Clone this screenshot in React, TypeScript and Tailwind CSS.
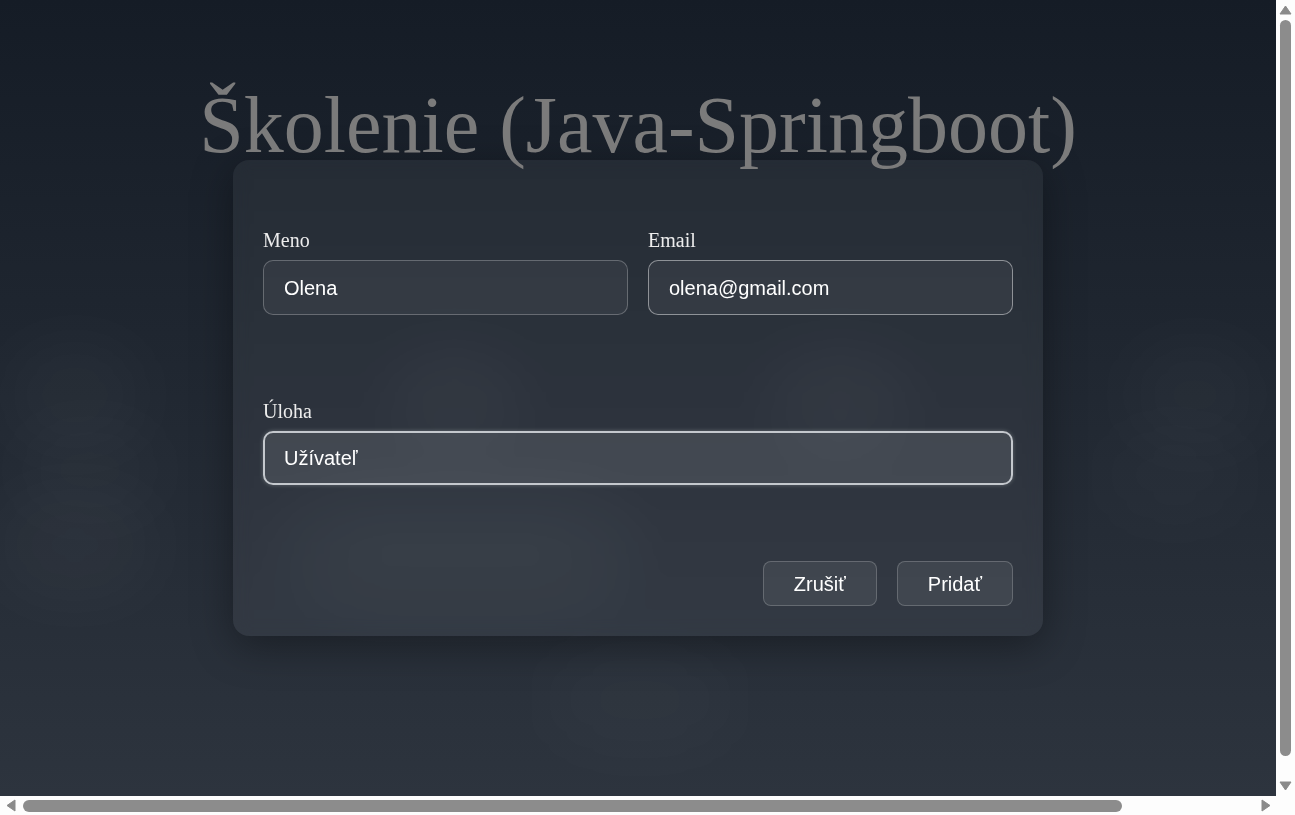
import React from "react";

function Arrow({ dir }: { dir: "up" | "down" | "left" | "right" }) {
  const pts =
    dir === "up"
      ? "6.5,1 12,9 1,9"
      : dir === "down"
      ? "1,1 12,1 6.5,9"
      : dir === "left"
      ? "9,1 9,12 1,6.5"
      : "1,1 9,6.5 1,12";
  const w = dir === "up" || dir === "down" ? 13 : 10;
  const h = dir === "up" || dir === "down" ? 10 : 13;
  return (
    <svg width={w} height={h} viewBox={`0 0 ${w} ${h}`}>
      <polygon points={pts} fill="#8a8a8a" strokeLinejoin="round" stroke="#8a8a8a" strokeWidth="1" />
    </svg>
  );
}

export default function App() {
  return (
    <div className="flex h-screen w-full flex-col overflow-hidden bg-white">
      <div className="flex min-h-0 flex-1">
        <main className="relative min-w-0 flex-1 overflow-hidden bg-linear-to-b from-[#151c26] via-[#212832] to-[#2d343e] font-['Liberation_Serif',serif]">
          <div className="pointer-events-none absolute inset-0">
            <div className="absolute left-[10px] top-[350px] h-[90px] w-[130px] rounded-full bg-white/[0.04] blur-2xl" />
            <div className="absolute left-[390px] top-[350px] h-[90px] w-[130px] rounded-full bg-white/[0.04] blur-2xl" />
            <div className="absolute left-[770px] top-[350px] h-[90px] w-[140px] rounded-full bg-white/[0.04] blur-2xl" />
            <div className="absolute left-[1130px] top-[350px] h-[90px] w-[130px] rounded-full bg-white/[0.035] blur-2xl" />
            <div className="absolute left-[20px] top-[430px] h-[80px] w-[140px] rounded-full bg-white/[0.03] blur-2xl" />
            <div className="absolute left-[0px] top-[500px] h-[90px] w-[150px] rounded-full bg-white/[0.04] blur-2xl" />
            <div className="absolute left-[290px] top-[500px] h-[100px] w-[340px] rounded-full bg-white/[0.045] blur-2xl" />
            <div className="absolute left-[1100px] top-[430px] h-[90px] w-[150px] rounded-full bg-white/[0.025] blur-2xl" />
            <div className="absolute left-[540px] top-[650px] h-[100px] w-[200px] rounded-full bg-white/[0.025] blur-2xl" />
          </div>

          <div className="relative flex flex-col items-center">
            <h1 className="relative z-10 mt-[81px] whitespace-nowrap text-[80px] font-normal leading-[89px] text-[#7b7b7b]">
              Školenie (Java-Springboot)
            </h1>

            <div className="-mt-[10px] w-[810px] rounded-[16px] bg-white/[0.05] px-[30px] pb-[30px] pt-[69px] shadow-[0_10px_40px_rgba(0,0,0,0.35)] backdrop-blur-sm">
              <div className="grid grid-cols-2 gap-x-5">
                <div className="flex flex-col">
                  <label className="mb-2 text-[20px] leading-[23px] text-[#ededed]">Meno</label>
                  <div className="flex h-[55px] items-center rounded-[10px] border border-white/25 bg-white/[0.05] pl-5 font-['Liberation_Sans',Arial,sans-serif] text-[20px] text-white">
                    Olena
                  </div>
                </div>
                <div className="flex flex-col">
                  <label className="mb-2 text-[20px] leading-[23px] text-[#ededed]">Email</label>
                  <div className="flex h-[55px] items-center rounded-[10px] border border-white/45 bg-white/[0.05] pl-5 font-['Liberation_Sans',Arial,sans-serif] text-[20px] text-white">
                    olena@gmail.com
                  </div>
                </div>
              </div>

              <div className="mt-[85px] flex flex-col">
                <label className="mb-2 text-[20px] leading-[23px] text-[#ededed]">Úloha</label>
                <div className="flex h-[54px] items-center rounded-[10px] border-2 border-[#c4c8cd] bg-white/[0.1] pl-[19px] font-['Liberation_Sans',Arial,sans-serif] text-[20px] text-white shadow-[0_0_4px_rgba(255,255,255,0.25)]">
                  Užívateľ
                </div>
              </div>

              <div className="mt-[76px] flex justify-end gap-5 font-['Liberation_Sans',Arial,sans-serif]">
                <button className="h-[45px] rounded-[8px] border border-white/20 bg-white/[0.07] px-[30px] text-[20px] text-white">
                  Zrušiť
                </button>
                <button className="h-[45px] rounded-[8px] border border-white/20 bg-white/[0.07] px-[30px] text-[20px] text-white">
                  Pridať
                </button>
              </div>
            </div>
          </div>
        </main>

        {/* vertical scrollbar */}
        <div className="flex w-[19px] flex-col items-center bg-[#fdfdfd]">
          <div className="flex h-[20px] items-start justify-center pt-[5px]">
            <Arrow dir="up" />
          </div>
          <div className="flex min-h-0 flex-1 flex-col">
            <div className="h-[736px] w-[11px] rounded-full bg-[#8c8c8c]" />
          </div>
          <div className="flex h-[19px] items-start justify-center pt-[4px]">
            <Arrow dir="down" />
          </div>
        </div>
      </div>

      {/* horizontal scrollbar */}
      <div className="flex h-[19px] items-center bg-[#fdfdfd]">
        <div className="flex w-[20px] items-center justify-center pl-[1px]">
          <Arrow dir="left" />
        </div>
        <div className="ml-[3px] h-[12px] w-[1099px] rounded-full bg-[#8c8c8c]" />
        <div className="flex-1" />
        <div className="flex w-[20px] items-center justify-center">
          <Arrow dir="right" />
        </div>
        <div className="w-[19px]" />
      </div>
    </div>
  );
}
